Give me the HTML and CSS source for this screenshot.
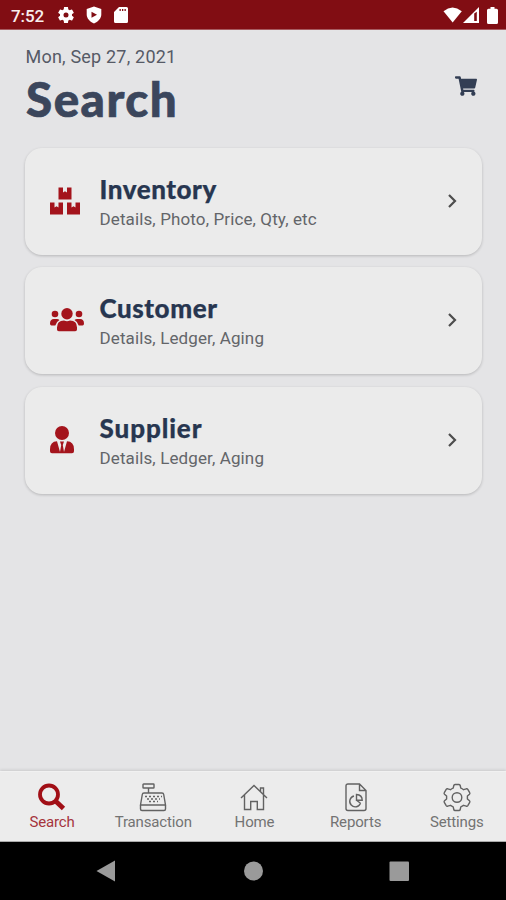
FILE: index.html
```
<!DOCTYPE html>
<html lang="en">
<head>
<meta charset="utf-8">
<title>Search</title>
<link rel="stylesheet" href="styles.css">
</head>
<body>
<div class="phone">
  <header class="status">
    <span class="clock">7:52</span>
    <svg class="gear" width="20" height="20" viewBox="0 0 24 24"><path fill-rule="evenodd" d="M19.14 12.94c.04-.3.06-.61.06-.94 0-.32-.02-.64-.07-.94l2.03-1.58c.18-.14.23-.41.12-.61l-1.92-3.32c-.12-.22-.37-.29-.59-.22l-2.39.96c-.5-.38-1.03-.7-1.62-.94l-.36-2.54c-.04-.24-.24-.41-.48-.41h-3.84c-.24 0-.43.17-.47.41l-.36 2.54c-.59.24-1.13.57-1.62.94l-2.39-.96c-.22-.08-.47 0-.59.22L2.74 8.87c-.12.21-.08.47.12.61l2.03 1.58c-.05.3-.09.63-.09.94s.02.64.07.94l-2.03 1.58c-.18.14-.23.41-.12.61l1.92 3.32c.12.22.37.29.59.22l2.39-.96c.5.38 1.03.7 1.62.94l.36 2.54c.05.24.24.41.48.41h3.84c.24 0 .44-.17.47-.41l.36-2.54c.59-.24 1.13-.56 1.62-.94l2.39.96c.22.08.47 0 .59-.22l1.92-3.32c.12-.22.07-.47-.12-.61l-2.01-1.58zM12 15a3 3 0 1 1 0-6 3 3 0 0 1 0 6z"/></svg>
    <svg class="shield" width="16" height="18" viewBox="0 0 16 18"><path fill-rule="evenodd" d="M8 .5 15.300 3v5.500C15.300 12.500 12 15.800 8 17.500 4 15.800.7 12.500.7 8.500V3zM5.500 5.800v6L11 8.800z"/></svg>
    <svg class="sd" width="14" height="16" viewBox="0 0 14 16"><path fill-rule="evenodd" d="M5 0h7.500Q14 0 14 1.500v13q0 1.500-1.500 1.500h-11Q0 16 0 14.500V5zM5.500 2v2h1.300V2zm2.500 0v2h1.300V2zm2.500 0v2h1.300V2z"/></svg>
    <div class="signals">
      <svg width="20" height="16" viewBox="0 0 20 16"><path d="M.5 4.200Q9.500-3.200 18.800 4.200L9.700 15.500z"/></svg>
      <svg width="16" height="16" viewBox="0 0 16 16"><path fill-rule="evenodd" d="M0 16 16 0v16zM11.200 6.500V14h2.600V4.800z"/></svg>
      <svg class="battery" width="11" height="17" viewBox="0 0 11 17"><path d="M3.500 0h4v1.700h2q1.500 0 1.500 1.500v12.300q0 1.500-1.500 1.500h-8Q0 17 0 15.500V3.200Q0 1.700 1.500 1.700h2z"/></svg>
    </div>
  </header>

  <main>
    <div class="heading">
      <div>
        <p class="date">Mon, Sep 27, 2021</p>
        <h1>Search</h1>
      </div>
      <svg class="cart" width="22" height="20" viewBox="0 0 576 512"><path d="M528.120 301.319l47.273-208C578.806 78.301 567.391 64 551.990 64H159.208l-9.166-44.810C147.758 8.021 137.930 0 126.529 0H24C10.745 0 0 10.745 0 24v16c0 13.255 10.745 24 24 24h69.883l70.248 343.435C147.325 417.100 136 435.222 136 456c0 30.928 25.072 56 56 56s56-25.072 56-56c0-15.674-6.447-29.835-16.824-40h209.647C430.447 426.165 424 440.326 424 456c0 30.928 25.072 56 56 56s56-25.072 56-56c0-22.172-12.888-41.332-31.579-50.405l5.517-24.276c3.413-15.018-8.002-29.319-23.403-29.319H218.117l-6.545-32h293.145c11.206 0 20.920-7.754 23.403-18.681z"/></svg>
    </div>

    <section class="cards">
      <article class="card">
        <svg class="icon" width="36" height="30" viewBox="0 0 36 30"><path d="M9.500 1.500h4.500v5l2-1.200 2 1.200v-5h4.500v12h-13zM1 16.500h4.500v5l2-1.200 2 1.200v-5H14v12H1zM18 16.500h4.500v5l2-1.200 2 1.200v-5H31v12H18z"/></svg>
        <div class="copy"><h2 class="inventory">Inventory</h2><p>Details, Photo, Price, Qty, etc</p></div>
        <svg class="chevron" width="12" height="16" viewBox="0 0 12 16"><path d="m2 2 6 6-6 6"/></svg>
      </article>
      <article class="card">
        <svg class="icon" width="36" height="30" viewBox="0 0 36 30"><circle cx="18" cy="8.700" r="5.700"/><circle cx="6" cy="9" r="3.300"/><circle cx="30" cy="9" r="3.300"/><path d="M8 24.500v-2q0-7 7-7 3 1.300 6 0 7 0 7 7v2q0 1.800-1.800 1.800H9.800Q8 26.300 8 24.500zM1 18.500q0-4.500 4-4.500h3q1.300 0 2.500 1-3.500 2-4.200 5.500H2.500Q1 20.500 1 18.500zM35 18.500q0-4.500-4-4.500h-3q-1.300 0-2.500 1 3.500 2 4.200 5.500h3.800q1.500 0 1.500-2z"/></svg>
        <div class="copy"><h2 class="customer">Customer</h2><p>Details, Ledger, Aging</p></div>
        <svg class="chevron" width="12" height="16" viewBox="0 0 12 16"><path d="m2 2 6 6-6 6"/></svg>
      </article>
      <article class="card">
        <svg class="icon person" width="36" height="30" viewBox="0 0 36 30"><circle cx="13" cy="8" r="7"/><path d="M8 16.300 11 27l1.200-7-1.200-3.500h4L13.800 20l1.200 7 3-10.700q7 .3 7 8v2q0 2-2 2H3q-2 0-2-2v-2q0-7.700 7-8z"/></svg>
        <div class="copy"><h2 class="supplier">Supplier</h2><p>Details, Ledger, Aging</p></div>
        <svg class="chevron" width="12" height="16" viewBox="0 0 12 16"><path d="m2 2 6 6-6 6"/></svg>
      </article>
    </section>
  </main>

  <nav class="tabs">
    <a class="tab active">
      <svg width="30" height="30" viewBox="0 0 30 30"><circle cx="12" cy="11.500" r="9" stroke-width="3.800"/><path d="m19 18.500 7.500 7" stroke-width="4.800"/></svg>
      <span>Search</span>
    </a>
    <a class="tab">
      <svg width="30" height="30" viewBox="0 0 30 30"><rect x="5" y="1" width="11" height="4" rx=".6"/><path d="M10.500 5v5M6 10h18q1.500 0 1.700 1.500L27.500 22H2.500L4.300 11.500Q4.500 10 6 10zM2.500 22v4q0 1.500 1.500 1.500h22q1.500 0 1.500-1.500v-4"/><path stroke-dasharray="2 2" d="M7 13.500h17M9 16h13M11 18.500h9"/></svg>
      <span>Transaction</span>
    </a>
    <a class="tab">
      <svg width="30" height="30" viewBox="0 0 30 30"><path d="M2 15 15 2.500 28 15M5.500 12v14.500h6.200V18.500h6.600v8h6.200V12M21.500 8.500V5h3v6.500"/></svg>
      <span>Home</span>
    </a>
    <a class="tab">
      <svg width="30" height="30" viewBox="0 0 30 30"><path d="M7 1h11.500l6.500 6.500v18q0 2-2 2H7q-2 0-2-2V3q0-2 2-2zM18.500 1v6.500H25M13 13a5.500 5.500 0 1 0 6.500 7M15.500 11.500v5.800h5.700q0-5.500-5.700-5.800zM15.500 17.300l4 3"/></svg>
      <span>Reports</span>
    </a>
    <a class="tab">
      <svg width="30" height="30" viewBox="0 0 30 30"><circle cx="15" cy="14.500" r="4.800"/><path stroke-linejoin="round" d="M13 1.500h4q1 0 1.200 1l.6 2.700q1.500.5 2.700 1.500l2.800-.9q1-.2 1.500.6l1.900 3.300q.5.800-.2 1.500l-2.100 1.900v2.800l2.100 1.900q.7.700.2 1.500l-1.900 3.300q-.5.800-1.500.6l-2.800-.9q-1.200 1-2.700 1.500l-.6 2.700q-.2 1-1.200 1h-4q-1 0-1.200-1l-.6-2.700q-1.500-.5-2.700-1.500l-2.800.9q-1 .2-1.500-.6l-1.900-3.300q-.5-.8.200-1.500l2.100-1.900v-2.800l-2.100-1.900q-.7-.7-.2-1.500l1.900-3.300q.5-.8 1.500-.6l2.800.9q1.200-1 2.700-1.500l.6-2.700q.2-1 1.200-1z"/></svg>
      <span>Settings</span>
    </a>
  </nav>

  <footer class="system">
    <svg width="506" height="58" viewBox="0 0 506 58"><path d="M96.500 29 115 18.500v21z"/><circle cx="253.500" cy="29" r="9.500"/><rect x="389.500" y="19.500" width="19.500" height="19.500" rx="1"/></svg>
  </footer>
</div>
</body>
</html>
```
FILE: styles.css
```
* { box-sizing: border-box; }

body {
  margin: 0;
  font-family: Roboto, "Liberation Sans", sans-serif;
}

h1, h2, p { margin: 0; }
svg { display: block; flex: none; }

.phone {
  display: flex;
  flex-direction: column;
  width: 506px;
  height: 900px;
  overflow: hidden;
  background: #e4e4e6;
}

.status {
  display: flex;
  align-items: center;
  flex: none;
  height: 30px;
  padding: 1px 8px 0 11px;
  background: #810d13;
  border-bottom: 1px solid #a75b60;
  color: #f8eded;
  fill: #fff;
}

.clock {
  width: 45px;
  font-size: 17px;
  font-weight: 500;
  letter-spacing: -0.1px;
  line-height: 20px;
  padding-top: 2px;
}

.shield { margin-left: 10px; }
.sd { margin-left: 12px; }

.signals {
  display: flex;
  align-items: center;
  margin-left: auto;
}

.battery { margin-left: 8px; }

main {
  flex: 1;
  padding: 16px 24px 0 25px;
}

.heading {
  display: flex;
  justify-content: space-between;
  height: 101.5px;
}

.date {
  font-size: 18px;
  line-height: 22px;
  letter-spacing: 0.2px;
  padding-left: 0.5px;
  color: #565a66;
}

h1 {
  margin-top: 2px;
  padding-left: 1px;
  font: 900 47.5px/58px Lato, sans-serif;
  letter-spacing: 1.5px;
  color: #3b465c;
  -webkit-text-stroke: 0.7px #3b465c;
}

.cart {
  margin: 29.5px 5px 0 0;
  fill: #333e54;
}

.cards {
  display: flex;
  flex-direction: column;
  gap: 12.5px;
}

.card {
  display: flex;
  align-items: center;
  height: 107px;
  padding: 0 23.5px 1px 24px;
  border-radius: 17px;
  background: #ebebeb;
  box-shadow: 0 1px 3px rgba(0, 0, 0, 0.2);
}

.icon { fill: #a4141c; }

.copy {
  flex: 1;
  padding-left: 14.5px;
}

h2 {
  padding-top: 1px;
  font: 900 26px/32px Lato, sans-serif;
  letter-spacing: 0.55px;
  color: #273650;
  -webkit-text-stroke: 0.25px #273650;
}

.supplier { letter-spacing: 0.9px; }

.copy p {
  margin-top: 3px;
  font-size: 17px;
  line-height: 22px;
  letter-spacing: 0.12px;
  color: #636569;
}

.chevron {
  fill: none;
  stroke: #4d4d4d;
  stroke-width: 2.2;
}

.tabs {
  display: grid;
  grid-template-columns: repeat(5, 101.2px);
  flex: none;
  height: 71px;
  padding: 11px 0 0 1.5px;
  background: #ececec;
  border-top: 1px solid #f1f1f1;
  border-bottom: 1px solid #aaa;
  box-shadow: 0 -1px 3px rgba(0, 0, 0, 0.12);
}

.tab {
  display: flex;
  flex-direction: column;
  align-items: center;
  font-size: 15px;
  line-height: 18px;
  letter-spacing: -0.15px;
  color: #737373;
}

.tab svg {
  fill: none;
  stroke: #626262;
  stroke-width: 1.4;
}

.active { color: #a5343d; }
.active svg { stroke: #a10f16; }

.system {
  flex: none;
  height: 58px;
  background: #000;
  fill: #9a9a9a;
}
```
